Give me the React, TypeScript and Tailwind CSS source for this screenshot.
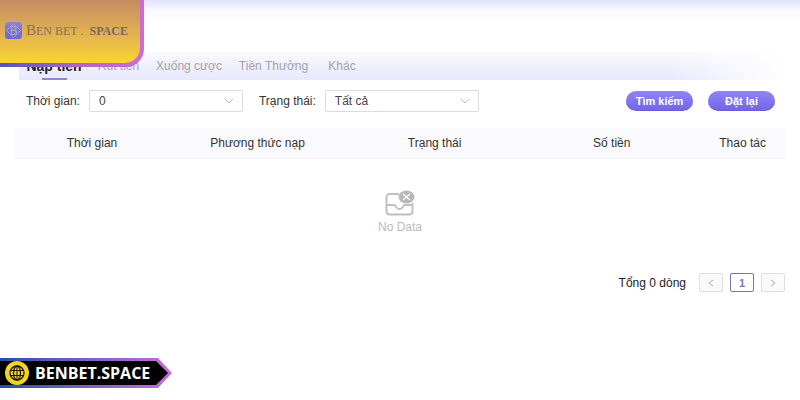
import { useState } from "react";

const TABS = [
  { label: "Nạp tiền", width: "w-[70px]" },
  { label: "Rút tiền", width: "w-[59px]" },
  { label: "Xuống cược", width: "w-[82px]" },
  { label: "Tiền Thưởng", width: "w-[87px]" },
  { label: "Khác", width: "w-[50px]" },
];

const COLUMNS = [
  { label: "Thời gian", width: "w-[20%]" },
  { label: "Phương thức nạp", width: "w-[23%]" },
  { label: "Trạng thái", width: "w-[23%]" },
  { label: "Số tiền", width: "w-[23%]" },
  { label: "Thao tác", width: "w-[11%]" },
];

function BrandMark() {
  return (
    <svg viewBox="0 0 34 34" className="h-[17px] w-[17px] shrink-0" aria-hidden="true">
      <defs>
        <linearGradient id="mark" x1="0" y1="0" x2="0" y2="1">
          <stop offset="0" stopColor="#8f80d8" />
          <stop offset="1" stopColor="#6866de" />
        </linearGradient>
      </defs>
      <rect width="34" height="34" rx="7" fill="url(#mark)" />
      <g fill="none" stroke="#b3a0c4" strokeWidth="1.8">
        <path d="M17 3 31 17 17 31 3 17Z" />
        <path d="M13 9v16h5.500a4.200 4.200 0 0 0 0-8.400H13M18 16.600a3.800 3.800 0 0 0 0-7.600H13" strokeWidth="2.400" />
      </g>
    </svg>
  );
}

function Logo() {
  return (
    <div className="absolute left-0 top-0 rounded-br-[18px] bg-linear-to-r from-[#5353b8] via-[#a866c4] to-[#cf6ad8] pr-1 pb-1">
      <a
        href="#"
        className="flex h-[63px] w-[140px] items-center gap-1 rounded-br-[15px] bg-linear-to-b from-[#c58c62] to-[#fad42d] pl-[5px] pb-[3px] font-['Liberation_Serif',serif] text-[#8b6e5b]"
      >
        <BrandMark />
        <span className="flex items-baseline gap-[6px] whitespace-nowrap text-[12px]">
          <span>
            <span className="text-[15px]">B</span>EN BET .
          </span>
          <b className="text-[#77675f]">SPACE</b>
        </span>
      </a>
    </div>
  );
}

function Filter({ id, label, options }: { id: string; label: string; options: string[] }) {
  return (
    <div className="flex items-center gap-[9px]">
      <label htmlFor={id} className="whitespace-nowrap text-[#333]">
        {label}
      </label>
      <div className="relative">
        <select
          id={id}
          className="h-[22px] w-[154px] appearance-none rounded-xs border border-[#dcdcdf] bg-white px-[9px] text-[#444]"
        >
          {options.map((option) => (
            <option key={option}>{option}</option>
          ))}
        </select>
        <svg
          viewBox="0 0 10 6"
          className="pointer-events-none absolute right-[9px] top-2 h-[6px] w-[10px]"
          fill="none"
          stroke="#bbb"
          aria-hidden="true"
        >
          <path d="m1 1 4 4 4-4" />
        </svg>
      </div>
    </div>
  );
}

function ActionButton({ children }: { children: string }) {
  return (
    <button className="h-5 w-[67px] rounded-full border-b border-[#6a5bdc] bg-linear-to-b from-[#9085f4] to-[#7465ea] text-[11px] font-bold text-white">
      {children}
    </button>
  );
}

function EmptyState() {
  return (
    <div className="flex flex-col items-center gap-[3px] pt-[31px] text-[12px] text-[#bbb]">
      <svg viewBox="0 0 30 26" className="h-[26px] w-[30px]" fill="none" aria-hidden="true">
        <path
          d="M14 4H4.500a3 3 0 0 0-3 3v14.500a3 3 0 0 0 3 3h20a3 3 0 0 0 3-3V13M1.500 15H9q1.500 0 2 1.500 1 2.500 3.500 2.500t3.500-2.500q.5-1.500 2-1.500h7.500"
          stroke="#bfbfbf"
          strokeWidth="1.900"
        />
        <ellipse cx="21.500" cy="7" rx="8" ry="6.500" fill="#b8b8b8" />
        <path d="m18 4 7 6m0-6-7 6" stroke="#fff" strokeWidth="1.300" />
      </svg>
      No Data
    </div>
  );
}

function Pagination() {
  const base = "flex h-[19px] w-6 items-center justify-center rounded-xs border";
  return (
    <nav className="flex items-center justify-end gap-[7px] px-[15px]">
      <span className="mr-[6px] text-[#222]">Tổng 0 dòng</span>
      <button disabled aria-label="Trang trước" className={`${base} border-[#dfdfe3] bg-[#fafafc]`}>
        <svg viewBox="0 0 6 8" className="h-2 w-[6px]" fill="none" stroke="#aaa">
          <path d="M5 1 1 4l4 3" />
        </svg>
      </button>
      <button aria-current="page" className={`${base} border-[#7b73bd] bg-white text-[11px] font-bold text-[#7b73bd]`}>
        1
      </button>
      <button disabled aria-label="Trang sau" className={`${base} border-[#dfdfe3] bg-[#fafafc]`}>
        <svg viewBox="0 0 6 8" className="h-2 w-[6px]" fill="none" stroke="#aaa">
          <path d="m1 1 4 3-4 3" />
        </svg>
      </button>
    </nav>
  );
}

function SiteBadge() {
  return (
    <a
      href="#"
      className="absolute left-0 top-[358px] bg-linear-to-r from-[#1c50a4] to-[#c86bdc] py-[3px] pr-1 [clip-path:polygon(0_0,calc(100%_-_14px)_0,100%_50%,calc(100%_-_14px)_100%,0_100%)]"
    >
      <span className="flex h-6 w-[168px] items-center gap-[6px] bg-black pl-[5px] [clip-path:polygon(0_0,calc(100%_-_12px)_0,100%_50%,calc(100%_-_12px)_100%,0_100%)]">
        <svg viewBox="0 0 24 24" className="h-6 w-6 shrink-0" fill="none" aria-hidden="true">
          <circle cx="12" cy="12" r="12" fill="#f4d321" />
          <g stroke="#1a1a1a" strokeWidth="1.300">
            <circle cx="12" cy="12" r="7" />
            <ellipse cx="12" cy="12" rx="3.500" ry="7" />
            <path d="M12 5v14M5.500 9.500h13M5.500 14.500h13" strokeWidth="1" />
          </g>
        </svg>
        <span className="font-['Open_Sans',sans-serif] text-[16px] font-bold text-white">BENBET.SPACE</span>
      </span>
    </a>
  );
}

export default function App() {
  const [activeTab, setActiveTab] = useState(TABS[0].label);

  return (
    <div className="relative min-h-screen bg-white font-['Liberation_Sans',Arial,sans-serif] text-[12px] leading-4">
      <div className="h-[52px] bg-linear-to-b from-[#dfe2fd] via-[#f9f9ff] via-20% to-white to-40%" />

      <div className="relative mr-[15px] ml-[19px] flex h-7 bg-linear-to-b from-[#f9f9fe] to-[#e7e8fc]">
        <div className="absolute inset-y-0 right-0 w-[15%] bg-linear-to-r from-transparent to-white" />
        {TABS.map((tab) => {
          const active = tab.label === activeTab;
          return (
            <button
              key={tab.label}
              onClick={() => setActiveTab(tab.label)}
              className={`flex flex-col items-center justify-end gap-1 whitespace-nowrap ${tab.width} ${
                active ? "text-[14px] font-bold text-[#222]" : "text-[#a3a3a8]"
              }`}
            >
              {tab.label}
              <span className={`h-[2px] w-[25px] ${active ? "bg-[#8e86d5]" : ""}`} />
            </button>
          );
        })}
      </div>

      <div className="flex items-center justify-between pt-[10px] pr-[25px] pl-[26px]">
        <div className="flex gap-4">
          <Filter id="time" label="Thời gian:" options={["0"]} />
          <Filter id="status" label="Trạng thái:" options={["Tất cả"]} />
        </div>
        <div className="flex gap-[15px]">
          <ActionButton>Tìm kiếm</ActionButton>
          <ActionButton>Đặt lại</ActionButton>
        </div>
      </div>

      <div className="mt-4 px-[15px]">
        <table className="w-full table-fixed">
          <thead>
            <tr className="h-[30px] border-b border-[#f3f3f8] bg-[#fafafc] text-[#333]">
              {COLUMNS.map((column) => (
                <th key={column.label} className={`font-normal ${column.width}`}>
                  {column.label}
                </th>
              ))}
            </tr>
          </thead>
          <tbody>
            <tr className="h-[115px]">
              <td colSpan={COLUMNS.length} className="align-top">
                <EmptyState />
              </td>
            </tr>
          </tbody>
        </table>
      </div>

      <Pagination />
      <Logo />
      <SiteBadge />
    </div>
  );
}
